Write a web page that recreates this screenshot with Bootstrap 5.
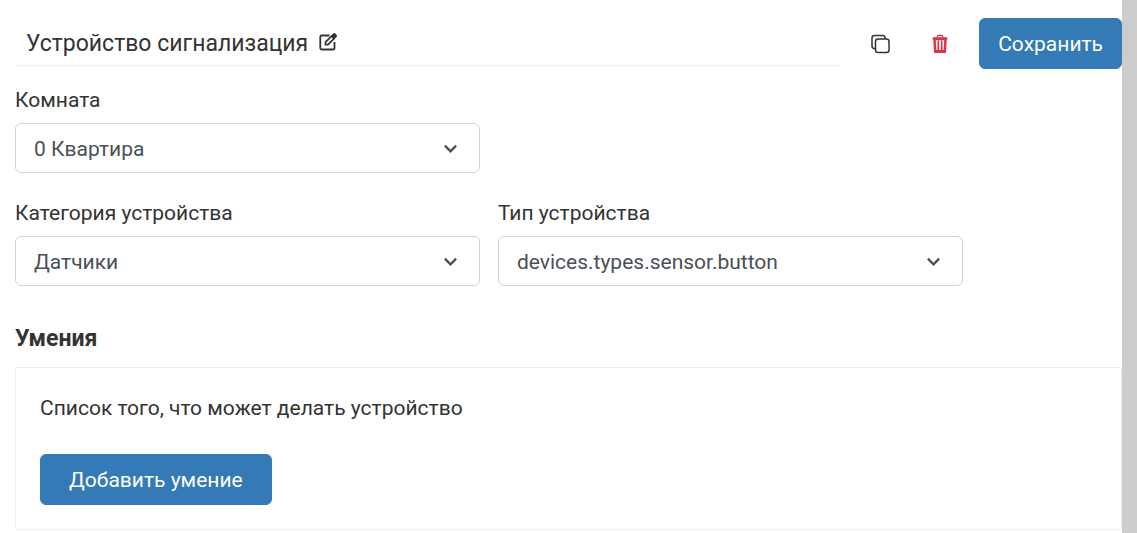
<!DOCTYPE html>
<html lang="ru">
<head>
<meta charset="utf-8">
<meta name="viewport" content="width=device-width, initial-scale=1">
<title>Устройство сигнализация</title>
<link href="https://cdn.jsdelivr.net/npm/bootstrap@5.3.0/dist/css/bootstrap.min.css" rel="stylesheet">
<style>
  body { font-family: Roboto, "Liberation Sans", sans-serif; font-size: 21px; line-height: 30px; color: #333; background: #ccc; }
  .page { min-height: 100vh; margin-right: 15px; padding: 18px 0 3px 15px; background: #fff; }
  .device-head { min-height: 51px; }
  .device-title { height: 48px; margin-right: 9px; padding-left: 11px; border-bottom: 1px solid #ececec; }
  .device-title h1 { padding-top: 4px; font-size: 23px; line-height: 30px; font-weight: 400; }
  .icon-btn { display: flex; align-items: center; justify-content: center; width: 60px; height: 51px; padding: 0; border: 0; background: none; color: #333; }
  .icon-btn.edit { width: 40px; height: 46px; }
  .icon-btn.remove { color: #dc3545; }
  .btn-main { --bs-btn-color: #fff; --bs-btn-bg: #337ab7; --bs-btn-border-color: #337ab7; --bs-btn-hover-color: #fff; --bs-btn-hover-bg: #286090; --bs-btn-hover-border-color: #286090; font-size: 21px; line-height: 30px; height: 51px; padding: 0 18px; border-radius: 6px; }
  .device-head .btn-main { margin-left: 9px; }
  .fields { gap: 18px; margin-bottom: 25px; }
  .field { flex: 0 0 42%; min-width: 0; }
  .field label { display: block; margin-bottom: 8px; }
  .form-select { height: 50px; padding: 2px 48px 0 18px; font-size: 21px; line-height: 30px; color: #495057; border-color: #ced4da; border-radius: 6px;
    background-image: url("data:image/svg+xml,%3Csvg xmlns='http://www.w3.org/2000/svg' viewBox='0 0 16 16'%3E%3Cpath fill='none' stroke='%23495057' stroke-width='2.5' d='M2 5l6 6 6-6'/%3E%3C/svg%3E"); background-position: right 21px center; background-size: 15px 15px; }
  .skills-title { font-size: 23px; line-height: 30px; font-weight: 700; margin: 38px 0 13px; }
  .skills { padding: 24px; border: 1px solid #ececec; border-radius: 3px; }
  .skills p { line-height: 32px; margin-bottom: 30px; }
  .skills .btn-main { padding: 0 28px; }
</style>
</head>
<body>
<main class="page">
  <header class="device-head d-flex">
    <div class="device-title d-flex align-items-center flex-grow-1">
      <h1 class="mb-0">Устройство сигнализация</h1>
      <button class="icon-btn edit" type="button" aria-label="Переименовать">
        <svg width="20" height="20" viewBox="0 0 20 20" fill="none" stroke="currentColor" stroke-width="1.800"><path d="M11.500 3.500H3.500Q2.300 3.500 2.300 4.700V16.300Q2.300 17.500 3.500 17.500H15.300Q16.500 17.500 16.500 16.300V10"/><path d="M7.500 10.200V12.700H10L16 6.700L13.500 4.200Z" stroke-width="1.700"/><path d="M13.900 3.800L15.600 2.100Q16.200 1.600 16.800 2.100L18 3.300Q18.500 3.900 18 4.500L16.300 6.200Z" fill="currentColor" stroke-width="1.500"/></svg>
      </button>
    </div>
    <div class="d-flex">
      <button class="icon-btn copy" type="button" aria-label="Копировать">
        <svg width="20" height="20" viewBox="0 0 20 20" fill="none" stroke="currentColor" stroke-width="1.500"><rect x="5.500" y="5" width="13.500" height="13.500" rx="2.500"/><path d="M5.200 14.700Q2 14.700 2 12V3.800Q2 1.500 4.300 1.500H12.500Q15.200 1.500 15.200 4.700"/></svg>
      </button>
      <button class="icon-btn remove" type="button" aria-label="Удалить">
        <svg width="20" height="20" viewBox="0 0 20 20" fill="none" stroke="currentColor"><path d="M7.300 3.800V2.700Q7.300 1.300 8.700 1.300H11.300Q12.700 1.300 12.700 2.700V3.800" stroke-width="1.300"/><path d="M2.700 4.400H17.300" stroke-width="2.400"/><path d="M4.500 5L5.200 17.800H14.800L15.500 5" stroke-width="2.500"/><path d="M8.300 6.500V16M11.700 6.500V16" stroke-width="1.700"/><path d="M5 5.500H15M5 16.800H15" stroke-width="1.500"/></svg>
      </button>
      <button class="btn btn-main" type="button">Сохранить</button>
    </div>
  </header>
  <form>
    <div class="fields d-flex mt-3">
      <div class="field">
        <label for="room">Комната</label>
        <select class="form-select" id="room"><option>0 Квартира</option></select>
      </div>
    </div>
    <div class="fields d-flex">
      <div class="field">
        <label for="category">Категория устройства</label>
        <select class="form-select" id="category"><option>Датчики</option></select>
      </div>
      <div class="field">
        <label for="type">Тип устройства</label>
        <select class="form-select" id="type"><option>devices.types.sensor.button</option></select>
      </div>
    </div>
  </form>
  <h2 class="skills-title">Умения</h2>
  <section class="skills">
    <p>Список того, что может делать устройство</p>
    <button class="btn btn-main" type="button">Добавить умение</button>
  </section>
</main>
<script src="https://cdn.jsdelivr.net/npm/bootstrap@5.3.0/dist/js/bootstrap.bundle.min.js"></script>
</body>
</html>
